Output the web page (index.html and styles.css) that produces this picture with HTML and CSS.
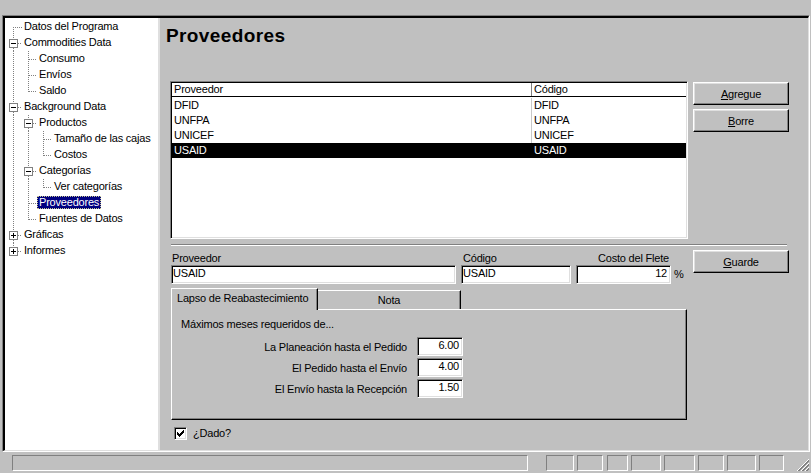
FILE: index.html
```html
<!DOCTYPE html>
<html lang="es">
<head>
<meta charset="utf-8">
<title>Proveedores</title>
<link rel="stylesheet" href="styles.css">
</head>
<body>
<div class="topbar"></div>
<div class="frame">
  <div class="frame-inner">
    <div class="tree">
      <div class="node"><svg class="g" width="17" height="16"><g class="dot"><path d="M8.5 8V16M8 8.5H17"/></g></svg><span class="label">Datos del Programa</span></div>
      <div class="node"><svg class="g" width="17" height="16"><g class="dot"><path d="M8.5 0V4M8.5 13V16M13 8.5H17"/></g><rect class="box" x="4.5" y="4.5" width="8" height="8"/><path class="sign" d="M6 8.5H11"/></svg><span class="label">Commodities Data</span></div>
      <div class="node"><svg class="g" width="32" height="16"><g class="dot"><path d="M8.5 0V16M23.5 0V16M24 8.5H32"/></g></svg><span class="label">Consumo</span></div>
      <div class="node"><svg class="g" width="32" height="16"><g class="dot"><path d="M8.5 0V16M23.5 0V16M24 8.5H32"/></g></svg><span class="label">Envíos</span></div>
      <div class="node"><svg class="g" width="32" height="16"><g class="dot"><path d="M8.5 0V16M23.5 0V9M24 8.5H32"/></g></svg><span class="label">Saldo</span></div>
      <div class="node"><svg class="g" width="17" height="16"><g class="dot"><path d="M8.5 0V4M8.5 13V16M13 8.5H17"/></g><rect class="box" x="4.5" y="4.5" width="8" height="8"/><path class="sign" d="M6 8.5H11"/></svg><span class="label">Background Data</span></div>
      <div class="node"><svg class="g" width="32" height="16"><g class="dot"><path d="M8.5 0V16M23.5 0V4M23.5 13V16M28 8.5H32"/></g><rect class="box" x="19.5" y="4.5" width="8" height="8"/><path class="sign" d="M21 8.5H26"/></svg><span class="label">Productos</span></div>
      <div class="node"><svg class="g" width="47" height="16"><g class="dot"><path d="M8.5 0V16M23.5 0V16M38.5 0V16M39 8.5H47"/></g></svg><span class="label">Tamaño de las cajas</span></div>
      <div class="node"><svg class="g" width="47" height="16"><g class="dot"><path d="M8.5 0V16M23.5 0V16M38.5 0V9M39 8.5H47"/></g></svg><span class="label">Costos</span></div>
      <div class="node"><svg class="g" width="32" height="16"><g class="dot"><path d="M8.5 0V16M23.5 0V4M23.5 13V16M28 8.5H32"/></g><rect class="box" x="19.5" y="4.5" width="8" height="8"/><path class="sign" d="M21 8.5H26"/></svg><span class="label">Categorías</span></div>
      <div class="node"><svg class="g" width="47" height="16"><g class="dot"><path d="M8.5 0V16M23.5 0V16M38.5 0V9M39 8.5H47"/></g></svg><span class="label">Ver categorías</span></div>
      <div class="node"><svg class="g" width="32" height="16"><g class="dot"><path d="M8.5 0V16M23.5 0V16M24 8.5H32"/></g></svg><span class="label selected">Proveedores</span></div>
      <div class="node"><svg class="g" width="32" height="16"><g class="dot"><path d="M8.5 0V16M23.5 0V9M24 8.5H32"/></g></svg><span class="label">Fuentes de Datos</span></div>
      <div class="node"><svg class="g" width="17" height="16"><g class="dot"><path d="M8.5 0V4M8.5 13V16M13 8.5H17"/></g><rect class="box" x="4.5" y="4.5" width="8" height="8"/><path class="sign" d="M6 8.5H11M8.5 6V11"/></svg><span class="label">Gráficas</span></div>
      <div class="node"><svg class="g" width="17" height="16"><g class="dot"><path d="M8.5 0V4M13 8.5H17"/></g><rect class="box" x="4.5" y="4.5" width="8" height="8"/><path class="sign" d="M6 8.5H11M8.5 6V11"/></svg><span class="label">Informes</span></div>
    </div>

    <div class="form">
      <h1 class="title">Proveedores</h1>

      <div class="upper">
        <div class="listbox">
          <div class="lb-head">
            <div class="c1">Proveedor</div>
            <div class="c2">Código</div>
          </div>
          <div class="lb-body">
            <div class="lb-row"><div class="c1">DFID</div><div class="c2">DFID</div></div>
            <div class="lb-row"><div class="c1">UNFPA</div><div class="c2">UNFPA</div></div>
            <div class="lb-row"><div class="c1">UNICEF</div><div class="c2">UNICEF</div></div>
            <div class="lb-row sel"><div class="c1">USAID</div><div class="c2">USAID</div></div>
          </div>
        </div>
        <div class="btncol">
          <button class="btn"><u>A</u>gregue</button>
          <button class="btn"><u>B</u>orre</button>
        </div>
      </div>

      <div class="sep"></div>

      <div class="lower">
        <div class="lower-left">
          <div class="fields">
            <div class="field f1"><span class="flabel">Proveedor</span><div class="input">USAID</div></div>
            <div class="field f2"><span class="flabel">Código</span><div class="input">USAID</div></div>
            <div class="field f3"><span class="flabel">Costo del Flete</span><div class="input num">12</div></div>
            <span class="pct">%</span>
          </div>

          <div class="tabs">
            <div class="tab active">Lapso de Reabastecimiento</div>
            <div class="tab inactive">Nota</div>
          </div>
          <div class="tabpanel">
            <div class="intro">Máximos meses requeridos de...</div>
            <div class="prow"><span class="plabel">La Planeación hasta el Pedido</span><div class="input num small">6.00</div></div>
            <div class="prow"><span class="plabel">El Pedido hasta el Envío</span><div class="input num small">4.00</div></div>
            <div class="prow"><span class="plabel">El Envío hasta la Recepción</span><div class="input num small">1.50</div></div>
          </div>

          <div class="check-row">
            <span class="checkbox"><svg width="13" height="13" viewBox="0 0 13 13" shape-rendering="crispEdges"><rect x="3" y="5" width="1" height="3"/><rect x="4" y="6" width="1" height="3"/><rect x="5" y="7" width="1" height="3"/><rect x="6" y="6" width="1" height="3"/><rect x="7" y="5" width="1" height="3"/><rect x="8" y="4" width="1" height="3"/><rect x="9" y="3" width="1" height="3"/></svg></span>
            <span class="check-label">¿Dado?</span>
          </div>
        </div>
        <button class="btn guarde"><u>G</u>uarde</button>
      </div>
    </div>
  </div>
</div>

<div class="statusbar">
  <div class="sp s1"></div>
  <div class="sp s2"></div>
  <div class="sp s3"></div>
  <div class="sp s4"></div>
  <div class="sp s5"></div>
  <div class="sp s6"></div>
  <div class="sp s7"></div>
  <div class="sp s8"></div>
  <div class="sp s9"></div>
  <svg class="grip" width="12" height="12" viewBox="0 0 12 12" shape-rendering="crispEdges">
    <line x1="12" y1="0" x2="0" y2="12" stroke="#fff"/>
    <line x1="12" y1="1" x2="1" y2="12" stroke="#808080"/>
    <line x1="12" y1="2" x2="2" y2="12" stroke="#808080"/>
    <line x1="12" y1="4" x2="4" y2="12" stroke="#fff"/>
    <line x1="12" y1="5" x2="5" y2="12" stroke="#808080"/>
    <line x1="12" y1="6" x2="6" y2="12" stroke="#808080"/>
    <line x1="12" y1="8" x2="8" y2="12" stroke="#fff"/>
    <line x1="12" y1="9" x2="9" y2="12" stroke="#808080"/>
    <line x1="12" y1="10" x2="10" y2="12" stroke="#808080"/>
  </svg>
</div>
</body>
</html>
```

FILE: styles.css
```css
* { box-sizing: border-box; }

body {
  margin: 0;
  width: 811px;
  height: 473px;
  overflow: hidden;
  background: #c0c0c0;
  color: #000;
  font-family: "Liberation Sans", Arial, sans-serif;
  font-size: 11px;
  letter-spacing: -0.2px;
}

.topbar { height: 15px; }

.frame {
  margin-left: 2px;
  width: 808px;
  height: 437px;
  border: 1px solid;
  border-color: #808080 #fff #fff #808080;
}

.frame-inner {
  height: 100%;
  display: flex;
  border-style: solid;
  border-width: 2px 1px 1px 2px;
  border-color: #000 #dfdfdf #dfdfdf #000;
}

/* ---------- tree ---------- */
.tree {
  width: 155px;
  flex: none;
  background: #fff;
  border-right: 2px solid #dfdfdf;
  padding-top: 1px;
}

.node {
  display: flex;
  height: 16px;
  white-space: nowrap;
}

.g { flex: none; }
.g .dot path { stroke: #808080; stroke-dasharray: 1 1; fill: none; shape-rendering: crispEdges; }
.g .box { fill: #fff; stroke: #808080; shape-rendering: crispEdges; }
.g .sign { stroke: #000; fill: none; shape-rendering: crispEdges; }

.label {
  margin-top: 1px;
  height: 13px;
  line-height: 13px;
  padding: 0 2px;
}

.label.selected {
  background: #000080;
  color: #fff;
  outline: 1px dotted #c8c890;
  outline-offset: -1px;
}

/* ---------- form ---------- */
.form { flex: 1; }

.title {
  margin: 7px 0 0 6px;
  font-size: 19px;
  line-height: 22px;
  font-weight: bold;
  letter-spacing: 0.4px;
}

.upper {
  display: flex;
  margin: 34px 0 0 10px;
}

.listbox {
  width: 518px;
  height: 158px;
  background: #fff;
  border: 1px solid;
  border-color: #808080 #fff #fff #808080;
  box-shadow: inset 1px 1px #000, inset -1px -1px #dfdfdf;
  padding: 1px;
}

.lb-head {
  display: flex;
  height: 14px;
  line-height: 13px;
  border-bottom: 1px solid #000;
}

.lb-head .c1 { border-right: 1px solid #808080; }

.c1 { width: 360px; padding-left: 2px; flex: none; }
.c2 { flex: 1; padding-left: 2px; }

.lb-body { margin-top: 1px; }

.lb-row {
  display: flex;
  height: 15px;
  line-height: 15px;
}

.lb-row .c1 { border-right: 1px solid #c8c8c8; }

.lb-row.sel { background: #000; color: #fff; }
.lb-row.sel .c1 { border-right-color: #000; }

.btncol {
  display: flex;
  flex-direction: column;
  gap: 4px;
  margin: 1px 0 0 5px;
}

.btn {
  width: 96px;
  height: 23px;
  padding: 0;
  margin: 0;
  background: #c0c0c0;
  color: #000;
  font: inherit;
  letter-spacing: inherit;
  text-align: center;
  border: 1px solid;
  border-color: #fff #000 #000 #fff;
  box-shadow: inset -1px -1px #808080, inset 1px 1px #dfdfdf;
}

.sep {
  margin: 5px 0 0 11px;
  width: 616px;
  height: 2px;
  border-top: 1px solid #808080;
  border-bottom: 1px solid #fff;
}

.lower {
  display: flex;
  margin-left: 11px;
}

.lower-left { width: 516px; flex: none; }

.guarde { margin: 4px 0 0 6px; }

.fields {
  display: flex;
  align-items: flex-end;
  margin-top: 6px;
}

.field { display: flex; flex-direction: column; }
.flabel { line-height: 13px; height: 13px; white-space: nowrap; }

.f1 { width: 285px; margin-right: 5px; }
.f1 .flabel { padding-left: 1px; }
.f2 { width: 110px; margin-right: 5px; }
.f2 .flabel { padding-left: 2px; }
.f3 { width: 95px; }
.f3 .flabel { text-align: right; padding-right: 2px; }

.input {
  height: 19px;
  background: #fff;
  border: 1px solid;
  border-color: #808080 #fff #fff #808080;
  box-shadow: inset 1px 1px #000, inset -1px -1px #dfdfdf;
  line-height: 15px;
  padding: 0 2px 0 1px;
  white-space: nowrap;
}

.input.num { text-align: right; padding-right: 3px; }
.input.small { width: 46px; flex: none; line-height: 14px; }

.pct {
  margin-left: 3px;
  height: 19px;
  line-height: 19px;
}

/* ---------- tabs ---------- */
.tabs {
  display: flex;
  align-items: flex-end;
  height: 21px;
  margin-top: 4px;
}

.tab {
  background: #c0c0c0;
  line-height: 13px;
  padding-top: 3px;
  white-space: nowrap;
  border-top: 1px solid #fff;
  border-right: 1px solid #000;
  box-shadow: inset -1px 0 #808080;
}

.tab.active {
  position: relative;
  z-index: 1;
  width: 147px;
  height: 22px;
  margin-bottom: -1px;
  border-left: 1px solid #fff;
  padding-left: 5px;
}

.tab.inactive {
  width: 143px;
  height: 19px;
  text-align: center;
}

.tabpanel {
  width: 516px;
  height: 111px;
  border: 1px solid;
  border-color: #fff #000 #000 #fff;
  box-shadow: inset -1px -1px #808080;
  padding: 8px 0 0 9px;
}

.intro { line-height: 13px; height: 13px; }

.prow {
  display: flex;
  align-items: center;
  height: 19px;
  margin-top: 2px;
}

.intro + .prow { margin-top: 6px; }

.plabel {
  width: 226px;
  margin-right: 10px;
  text-align: right;
  white-space: nowrap;
}

/* ---------- checkbox ---------- */
.check-row {
  display: flex;
  align-items: center;
  margin: 7px 0 0 3px;
  height: 13px;
}

.checkbox {
  width: 13px;
  height: 13px;
  background: #fff;
  border: 1px solid;
  border-color: #808080 #fff #fff #808080;
  box-shadow: inset 1px 1px #000, inset -1px -1px #dfdfdf;
}

.checkbox svg { display: block; margin: -1px 0 0 -1px; }

.check-label { margin-left: 6px; line-height: 13px; }

/* ---------- status bar ---------- */
.statusbar {
  display: flex;
  height: 16px;
  margin-top: 3px;
  padding-left: 12px;
}

.sp {
  height: 16px;
  flex: none;
  border: 1px solid;
  border-color: #808080 #fff #fff #808080;
}

.s1 { width: 516px; }
.s2 { width: 28px; margin-left: 18px; }
.s3 { width: 26px; margin-left: 3px; }
.s4 { width: 21px; margin-left: 4px; }
.s5 { width: 30px; margin-left: 3px; }
.s6 { width: 31px; margin-left: 3px; }
.s7 { width: 26px; margin-left: 3px; }
.s8 { width: 29px; margin-left: 3px; }
.s9 { width: 25px; margin-left: 3px; }

.grip {
  margin-left: auto;
  margin-right: 2px;
  align-self: flex-end;
  flex: none;
}
```
